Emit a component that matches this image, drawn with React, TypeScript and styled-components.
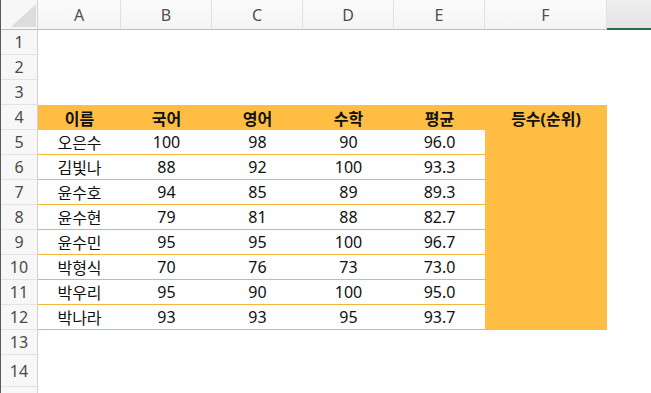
import React from "react";
import styled, { createGlobalStyle, css } from "styled-components";

const Global = createGlobalStyle`
  html, body { margin: 0; padding: 0; background: #fff; }
  body { font-family: "Noto Sans", "Noto Sans CJK KR", sans-serif; }
`;

const COLS = "37px 83px 91px 91px 91px 91px 122px 1fr";
const ORANGE = "#ffbd44";
const LINE = "#f5b43a";

const Sheet = styled.div`
  width: 651px;
  height: 393px;
  overflow: hidden;
  border-left: 1px solid #5a5a5a;
  box-sizing: border-box;
  display: flex;
  flex-direction: column;
`;

const Row = styled.div<{ $h: number }>`
  display: grid;
  grid-template-columns: ${COLS};
  height: ${(p) => p.$h}px;
  flex: none;
`;

const Corner = styled.div`
  background: #f7f7f7;
  border-right: 1px solid #d2d2d2;
  border-bottom: 1px solid #bdbdbd;
  box-sizing: border-box;
  display: flex;
  align-items: flex-end;
  justify-content: flex-end;
  padding: 0 1px 2px 0;
`;

const ColHead = styled.div<{ $active?: boolean }>`
  box-sizing: border-box;
  display: flex;
  align-items: center;
  justify-content: center;
  font-family: "Noto Sans", sans-serif;
  font-size: 16px;
  color: #505050;
  background: linear-gradient(#fbfbfb, #f4f4f4);
  border-right: 1px solid #e0e0e0;
  border-bottom: 1px solid #bdbdbd;
  ${(p) =>
    p.$active &&
    css`
      background: linear-gradient(#efefef, #e4e4e4);
      border-bottom: 2px solid #1f7346;
      border-right: none;
    `}
`;

const RowHead = styled.div`
  box-sizing: border-box;
  display: flex;
  align-items: center;
  justify-content: center;
  font-family: "Noto Sans", sans-serif;
  font-size: 16px;
  color: #4a4a4a;
  background: #f7f7f7;
  border-right: 1px solid #d2d2d2;
  border-bottom: 1px solid #e2e2e2;
`;

type Kind = "blank" | "head" | "data" | "rank";

const Cell = styled.div<{ $kind: Kind }>`
  box-sizing: border-box;
  display: flex;
  align-items: center;
  justify-content: center;
  font-family: "Noto Sans", "Noto Sans CJK KR", sans-serif;
  font-size: 16px;
  color: #111;
  background: #fff;
  ${(p) =>
    p.$kind === "head" &&
    css`
      background: ${ORANGE};
      font-weight: 700;
      padding-top: 1px;
    `}
  ${(p) =>
    p.$kind === "rank" &&
    css`
      background: ${ORANGE};
    `}
  ${(p) =>
    p.$kind === "data" &&
    css`
      border-bottom: 1px solid ${LINE};
    `}
`;

const headers = ["이름", "국어", "영어", "수학", "평균", "등수(순위)"];
const data: string[][] = [
  ["오은수", "100", "98", "90", "96.0"],
  ["김빛나", "88", "92", "100", "93.3"],
  ["윤수호", "94", "85", "89", "89.3"],
  ["윤수현", "79", "81", "88", "82.7"],
  ["윤수민", "95", "95", "100", "96.7"],
  ["박형식", "70", "76", "73", "73.0"],
  ["박우리", "95", "90", "100", "95.0"],
  ["박나라", "93", "93", "95", "93.7"],
];

const BlankRow = ({ n, h = 25 }: { n?: number; h?: number }) => (
  <Row $h={h}>
    <RowHead>{n}</RowHead>
    {Array.from({ length: 7 }).map((_, i) => (
      <Cell key={i} $kind="blank" />
    ))}
  </Row>
);

export default function App() {
  return (
    <>
      <Global />
      <Sheet>
        <Row $h={30}>
          <Corner>
            <svg width="25" height="23" viewBox="0 0 25 23">
              <polygon points="0,23 25,23 25,0" fill="#dcdcdc" />
            </svg>
          </Corner>
          {["A", "B", "C", "D", "E", "F"].map((c) => (
            <ColHead key={c}>{c}</ColHead>
          ))}
          <ColHead $active />
        </Row>
        <BlankRow n={1} />
        <BlankRow n={2} />
        <BlankRow n={3} />
        <Row $h={25}>
          <RowHead>4</RowHead>
          {headers.map((h) => (
            <Cell key={h} $kind="head">
              {h}
            </Cell>
          ))}
          <Cell $kind="blank" />
        </Row>
        {data.map((r, i) => (
          <Row $h={25} key={i}>
            <RowHead>{i + 5}</RowHead>
            {r.map((v, j) => (
              <Cell key={j} $kind="data">
                {v}
              </Cell>
            ))}
            <Cell $kind="rank" />
            <Cell $kind="blank" />
          </Row>
        ))}
        <BlankRow n={13} />
        <BlankRow n={14} h={32} />
        <BlankRow />
      </Sheet>
    </>
  );
}
